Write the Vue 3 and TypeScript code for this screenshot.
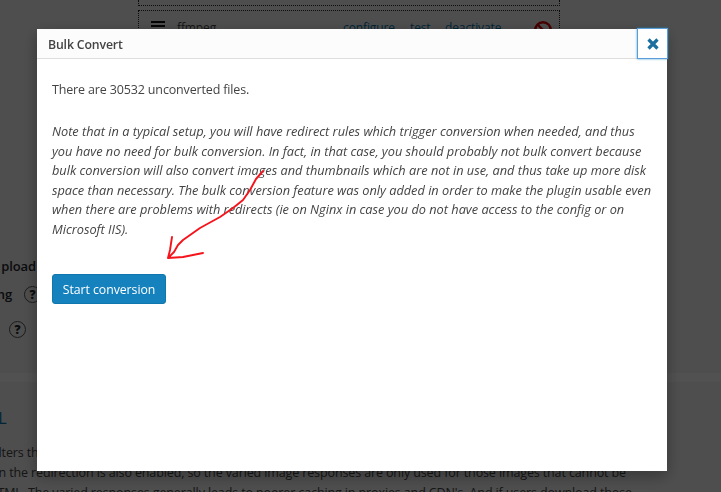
<script setup lang="ts">
const noteLines: string[] = [
  'Note that in a typical setup, you will have redirect rules which trigger conversion when needed, and thus',
  'you have no need for bulk conversion. In fact, in that case, you should probably not bulk convert because',
  'bulk conversion will also convert images and thumbnails which are not in use, and thus take up more disk',
  'space than necessary. The bulk conversion feature was only added in order to make the plugin usable even',
  'when there are problems with redirects (ie on Nginx in case you do not have access to the config or on',
  'Microsoft IIS).'
]
</script>

<template>
  <div class="page">
    <div class="converters">
      <div class="dotted-top"></div>
      <div class="row">
        <span class="burger"><i></i><i></i><i></i></span>
        <span class="name">ffmpeg</span>
        <a class="action first">configure</a>
        <a class="action test">test</a>
        <a class="action deact">deactivate</a>
        <svg class="no" width="20" height="20" viewBox="0 0 20 20">
          <circle cx="10" cy="10" r="7.8" fill="none" stroke="#d00" stroke-width="2.4" />
          <path d="M5 5 15 15" stroke="#d00" stroke-width="2.4" />
        </svg>
      </div>
    </div>
    <div class="left">
      <div class="frag upload"><span>Upload</span></div>
      <div class="frag metadata"><span>Metadata copying</span><b class="help">?</b></div>
      <div class="frag alone"><b class="help">?</b></div>
    </div>
    <div class="section">
      <div class="band"></div>
      <div class="heading"><a>HTML</a></div>
      <p class="line a"><span>This option alters the HTML</span></p>
      <p class="line b"><span>when the redirection is also enabled, so the varied image responses are only used for those images that cannot be</span></p>
      <p class="line c"><span>HTML. The varied responses generally leads to poorer caching in proxies and CDN's. And if users download those</span></p>
    </div>
  </div>

  <div class="backdrop"></div>

  <div class="modal">
    <header class="head">
      <h1 class="title">Bulk Convert</h1>
      <button class="close" aria-label="Close">
        <svg width="14" height="14" viewBox="0 0 14 14">
          <path d="M2.5 2.5 11.5 11.5M11.5 2.5 2.5 11.5" stroke="#1a6f9f" stroke-width="3.2" />
        </svg>
      </button>
    </header>
    <div class="body">
      <p class="count">There are 30532 unconverted files.</p>
      <p class="note"><template v-for="(line, i) in noteLines" :key="i">{{ line }}<br /></template></p>
      <button class="start">Start conversion</button>
    </div>
    <svg class="scribble" width="721" height="492" viewBox="0 0 721 492">
      <path
        d="M263 171 256 179 250 190 243 200 233 208 220 217 200 228 183 240 178 245 174 252 168 258M172 237 170 250 168 258 183 257 193 255 203 253"
        fill="none" stroke="#f5141b" stroke-width="1.9" stroke-linejoin="round" stroke-linecap="round"
      />
    </svg>
  </div>
</template>

<style>
html, body { margin: 0; overflow: hidden; }
</style>

<style scoped>
.page {
  width: 721px;
  height: 492px;
  overflow: hidden;
  background: #f1f1f1;
  color: #444;
  font: 12.5px/21px "Open Sans", sans-serif;
  letter-spacing: -0.12px;
  display: flex;
  flex-direction: column;
}
.converters {
  margin-left: 138px;
  width: 422px;
  flex: none;
}
.dotted-top {
  height: 5px;
  border: 1px dotted #222;
  border-top: 0;
}
.row {
  margin-top: 4px;
  height: 50px;
  border: 1px dotted #222;
  border-bottom: 0;
  display: flex;
  align-items: flex-start;
  padding-top: 6px;
  box-sizing: border-box;
  font-size: 12px;
}
.burger {
  margin: 4px 0 0 12px;
  width: 14px;
  display: flex;
  flex-direction: column;
  gap: 2px;
}
.burger i { height: 2px; background: #111; }
.name { margin-left: 12px; width: 166px; }
.action { color: #0073aa; }
.first { width: 67px; }
.test { width: 35px; }
.deact { width: 88px; }
.no { margin-top: 3px; }
.left { margin-top: 196px; flex: none; }
.frag {
  display: flex;
  justify-content: flex-end;
  align-items: center;
  white-space: nowrap;
  font-weight: 600;
  font-size: 13px;
  color: #23282d;
}
.upload { height: 28px; align-items: flex-start; width: 36px; }
.upload span { display: block; }
.upload span::first-letter { margin-right: 3px; }
.metadata { height: 35px; align-items: flex-start; width: 41px; gap: 12px; }
.alone { height: 21px; width: 26px; }
.help {
  flex: none;
  display: inline-flex;
  width: 15px;
  height: 15px;
  margin-top: 2px;
  border: 1px solid #555;
  border-radius: 50%;
  align-items: center;
  justify-content: center;
  font-size: 12px;
}
.alone .help { margin-top: 0; }
.section {
  margin-top: 33px;
  flex: none;
}
.band {
  height: 9px;
  background: #fbfbfb;
}
.heading {
  margin-top: 23px;
  width: 6.5px;
  display: flex;
  justify-content: flex-end;
  color: #0073aa;
  font-size: 16px;
  line-height: 26px;
  white-space: nowrap;
}
.line {
  display: flex;
  justify-content: flex-end;
  margin: 0;
  width: 721px;
  height: 20px;
  line-height: 20px;
  white-space: nowrap;
  box-sizing: border-box;
}
.a { margin-top: 12px; justify-content: flex-start; margin-left: -75px; }
.b { padding-right: 95px; }
.c { padding-right: 89px; }

.backdrop {
  position: fixed;
  inset: 0;
  background: rgba(0, 0, 0, 0.68);
}
.modal {
  position: fixed;
  left: 37px;
  top: 29px;
  width: 630px;
  height: 442px;
  background: #fff;
  box-shadow: 0 5px 15px rgba(0, 0, 0, 0.3);
  font-family: "Open Sans", sans-serif;
  color: #444;
  font-size: 12.5px;
  letter-spacing: -0.15px;
}
.head {
  height: 30px;
  box-sizing: border-box;
  background: #fcfcfc;
  border-bottom: 1px solid #ddd;
  padding: 3px 0 0 11px;
  display: flex;
  align-items: center;
}
.title {
  margin: 0;
  font-size: 12.3px;
  font-weight: 600;
  line-height: 26px;
  color: #444;
}
.close {
  position: absolute;
  top: -1px;
  right: -1px;
  width: 31px;
  height: 31px;
  padding: 0;
  background: #fff;
  border: 1px solid #5b9dd9;
  box-shadow: 0 0 2px rgba(30, 140, 190, 0.8);
  display: flex;
  align-items: center;
  justify-content: center;
}
.body { padding: 21px 15px 20px; }
.count { margin: 0; line-height: 20px; }
.note {
  margin: 22px 0 0;
  line-height: 19.6px;
  font-size: 12.75px;
  letter-spacing: 0;
  font-style: italic;
  white-space: nowrap;
}
.start {
  display: block;
  margin-top: 34px;
  width: 114px;
  height: 30px;
  padding: 1px 0 0;
  border: 1px solid #1077ae;
  border-radius: 3px;
  background: #1581bd;
  color: #fff;
  font: 12.3px/27px "Open Sans", sans-serif;
  letter-spacing: -0.05px;
}
.scribble {
  position: absolute;
  left: -37px;
  top: -29px;
  pointer-events: none;
}
</style>
